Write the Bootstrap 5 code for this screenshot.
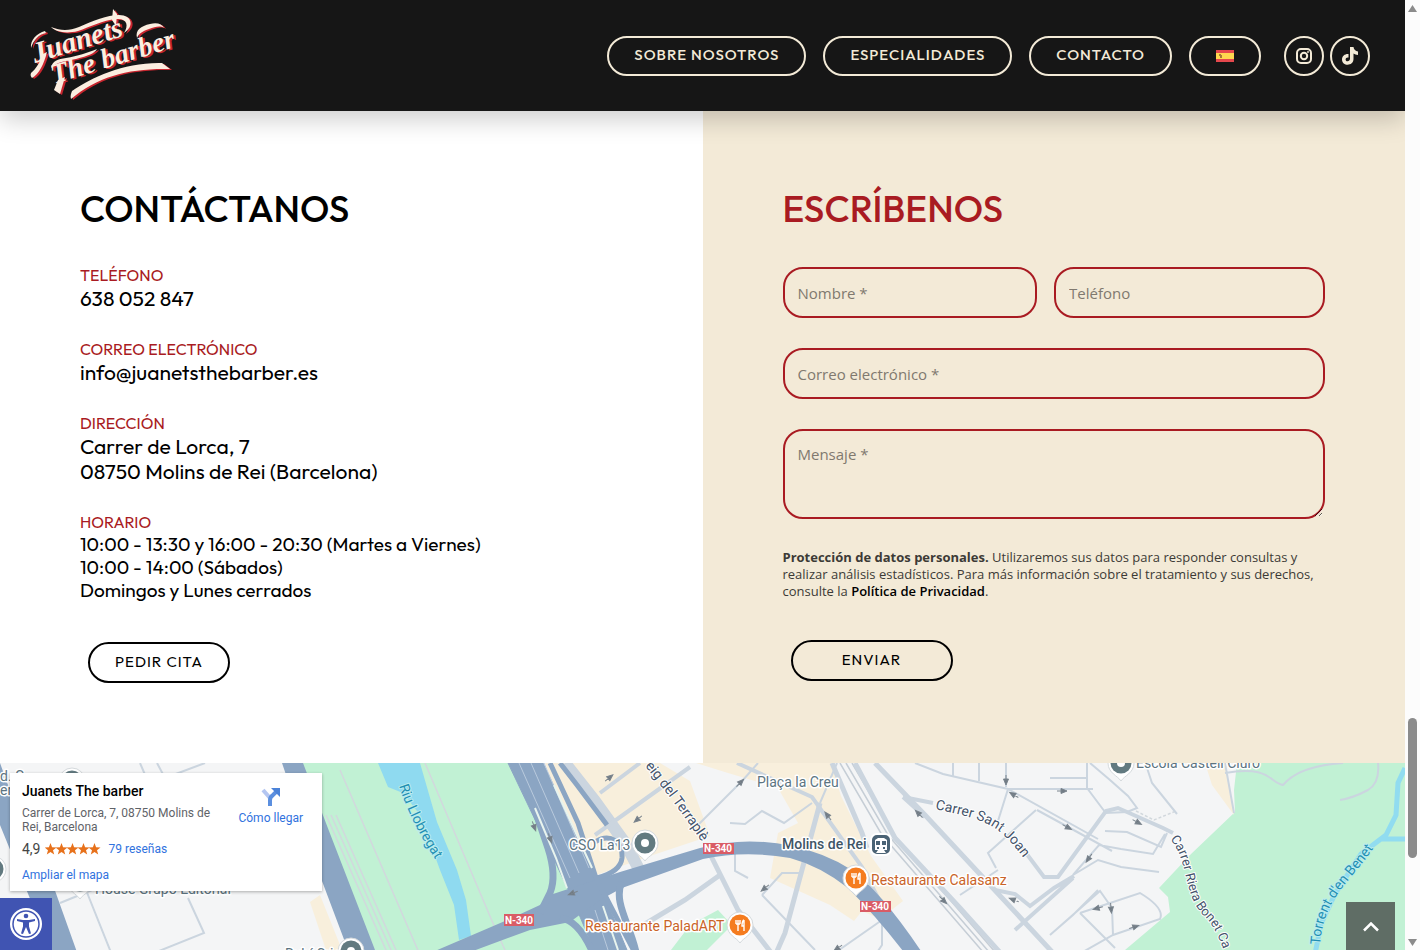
<!DOCTYPE html>
<html lang="es">
<head>
<meta charset="utf-8">
<meta name="viewport" content="width=device-width, initial-scale=1">
<title>Juanets The barber</title>
<link href="https://cdn.jsdelivr.net/npm/bootstrap@5.3.0/dist/css/bootstrap.min.css" rel="stylesheet">
<style>
  :root { --ink: #161616; --cream: #f3ead7; --brand: #a91b22; }
  body { font-family: Outfit, Lato, sans-serif; color: #000; background: #fff; }
  a { text-decoration: none; }
  .site-head { background: var(--ink); height: 111px; padding: 0 35px 0 30px; box-shadow: 0 8px 24px rgba(0,0,0,.2); z-index: 2; }
  .menu { gap: 17px; margin-right: 23px; }
  .social { gap: 6px; }
  .pill { display: inline-flex; align-items: center; justify-content: center; height: 40px; border: 2px solid var(--cream); border-radius: 20px; color: var(--cream); font-size: 15px; font-weight: 500; letter-spacing: 1px; padding: 0 25px; }
  .pill-flag { width: 72px; padding: 0; }
  .round { width: 40px; padding: 0; }
  .pane { padding: 74px 80px 80px; }
  .pane-form { background: var(--cream); }
  .pane h2 { font-size: 37px; font-weight: 500; line-height: 48px; margin-bottom: 32px; }
  .pane-form h2 { margin-bottom: 34px; }
  .pane-form h2, .tag { color: var(--brand); }
  .pane form { display: grid; gap: 30px; }
  .tag { font-size: 16px; line-height: 21px; }
  .big { font-size: 21px; line-height: 25px; }
  .hours { font-size: 19px; line-height: 23px; }
  .fact { margin-bottom: 28px; }
  .act { height: 41px; border: 2px solid #000; border-radius: 21px; background: transparent; color: #000; font-size: 15px; letter-spacing: 1px; margin: 12px 8px 0; width: 142px; }
  .act-send { width: 162px; margin-top: 10px; }
  .two-up { display: grid; grid-template-columns: 47fr 50fr; gap: 17px; }
  .field { width: 100%; height: 51px; border: 2px solid var(--brand); border-radius: 20px; background: transparent; padding: 0 13px; font: 15px "Open Sans", sans-serif; display: block; }
  .field::placeholder { color: #80796f; opacity: 1; }
  textarea.field { height: 90px; padding: 13px; resize: vertical; }
  .notice { font: 13px/17px "Open Sans", sans-serif; color: #3c3a36; margin: 0; }
  .notice a { color: #000; font-weight: 600; }
  .map-zone { min-height: 187px; background: #f4f5f6; font-family: Roboto, sans-serif; }
  .map-zone > svg { position: absolute; inset: 0; width: 100%; height: 100%; }
  .place { position: absolute; left: 10px; top: 10px; width: 312px; background: #fff; box-shadow: 0 1px 3px rgba(0,0,0,.3); padding: 10px 11px 9px 12px; font-size: 12px; line-height: 14px; color: #5f6368; }
  .place a { color: #3072de; }
  .place h3 { font-size: 14px; line-height: 16px; font-weight: 500; color: #000; margin: 0 0 7px; }
  .score { font-size: 14px; color: #444; }
  .access { position: absolute; left: 0; bottom: 0; width: 52px; height: 52px; background: #4054b2; border: 0; padding: 0; }
  .to-top { position: absolute; right: 10px; bottom: 0; width: 49px; height: 48px; background: #5f6d65; border: 0; padding: 0; }
  .rail { width: 15px; background: #fcfcfc; height: 100vh; top: 0; padding: 4px 0; }
  .thumb { width: 9px; height: 140px; border-radius: 5px; background: #8b8b8b; margin-bottom: 80px; }
</style>
</head>
<body>
<div class="d-flex">
<div class="d-flex flex-column flex-grow-1 min-vh-100 overflow-hidden">
  <header class="site-head d-flex align-items-center justify-content-between position-relative">
    <a href="#" aria-label="Juanets The barber">
      <svg width="150" height="96" viewBox="30 8 150 96" font-family="Liberation Serif, serif" font-weight="700" font-style="italic">
        <defs>
          <g id="brand">
            <text transform="translate(35 63) rotate(-17)" font-size="29">Juanets</text>
            <text transform="translate(54 84) rotate(-17)" font-size="28">The barber</text>
            <path d="M51 27c10 4 18 4 28 0 14-6 28-12 40-12 14 0 15 12 5 18 5-8 3-15-8-14-13 1-26 8-38 12-12 3-22 1-27-4z"/>
            <path d="M112 20l1-11 4 5-1 12z"/>
            <path d="M46 33c-7 1-13 8-15 15-1-8 6-15 14-17z"/>
            <path d="M31 73c5-4 9-11 12-19l4-2c-3 12-8 22-15 26-1-1-2-3-1-5z"/>
            <path d="M51 68c1-7 7-9 15-10 12-2 21-5 31-9-2 4-9 7-21 10-11 2-19 3-25 9z"/>
            <path d="M58 80l7-3-5 17-6-4z"/>
            <path d="M71 99c-1-3 0-5 1-8 20-14 53-29 90-28l8 6c-40-1-72 7-99 30z"/>
            <path d="M137 38c-2-8 4-12 13-14 7-2 12 0 14 4-4-3-9-1-15 1-6 2-10 4-12 9z"/>
          </g>
        </defs>
        <use href="#brand" x="2" y="1" fill="#c7252e"/>
        <use href="#brand" fill="#fbeee0"/>
      </svg>
    </a>
    <nav class="d-flex align-items-center">
      <div class="d-flex menu">
        <a class="pill" href="#">SOBRE NOSOTROS</a>
        <a class="pill" href="#">ESPECIALIDADES</a>
        <a class="pill" href="#">CONTACTO</a>
        <a class="pill pill-flag" href="#" aria-label="Español"><svg width="18" height="12" viewBox="0 0 18 12"><path fill="#e5484d" d="M0 0h18v12H0z"/><path fill="#ffd84f" d="M0 3h18v6H0z"/><path fill="#a77a35" d="M3 4h2v1h1v3H4V6H3z"/></svg></a>
      </div>
      <div class="d-flex social">
        <a class="pill round" href="#" aria-label="Instagram"><svg width="16" height="16" viewBox="0 0 16 16" fill="none" stroke="#f3ead7" stroke-width="2"><rect x="1" y="1" width="14" height="14" rx="4"/><circle cx="8" cy="8" r="3.200"/><circle cx="12" cy="4" r=".6" stroke-width="1"/></svg></a>
        <a class="pill round" href="#" aria-label="TikTok"><svg width="16" height="18" viewBox="0 0 16 18"><path fill="#f3ead7" d="M8 0h3.500c.3 2.600 2 4.200 4.500 4.600V8c-1.800 0-3.300-.5-4.500-1.400V12c0 7.500-11.500 7.500-11.500.4C0 9 3 6.700 6.500 7v3.600C4.700 10.300 3.600 11.200 3.600 12.400c0 2.700 4.400 2.500 4.400-.6z"/></svg></a>
      </div>
    </nav>
  </header>

  <main class="row g-0">
    <section class="col-6 pane">
      <h2>CONTÁCTANOS</h2>
      <div class="fact"><div class="tag">TELÉFONO</div><div class="big">638 052 847</div></div>
      <div class="fact"><div class="tag">CORREO ELECTRÓNICO</div><div class="big">info@juanetsthebarber.es</div></div>
      <div class="fact"><div class="tag">DIRECCIÓN</div><div class="big">Carrer de Lorca, 7<br>08750 Molins de Rei (Barcelona)</div></div>
      <div class="fact"><div class="tag">HORARIO</div><div class="hours">10:00 - 13:30 y 16:00 - 20:30 (Martes a Viernes)<br>10:00 - 14:00 (Sábados)<br>Domingos y Lunes cerrados</div></div>
      <button class="act" type="button">PEDIR CITA</button>
    </section>
    <section class="col-6 pane pane-form">
      <h2>ESCRÍBENOS</h2>
      <form>
        <div class="two-up">
          <input class="field" type="text" placeholder="Nombre *" aria-label="Nombre">
          <input class="field" type="tel" placeholder="Teléfono" aria-label="Teléfono">
        </div>
        <input class="field" type="email" placeholder="Correo electrónico *" aria-label="Correo electrónico">
        <textarea class="field" placeholder="Mensaje *" aria-label="Mensaje"></textarea>
        <p class="notice"><strong>Protección de datos personales.</strong> Utilizaremos sus datos para responder consultas y realizar análisis estadísticos. Para más información sobre el tratamiento y sus derechos, consulte la <a href="#">Política de Privacidad</a>.</p>
        <button class="act act-send" type="submit">ENVIAR</button>
      </form>
    </section>
  </main>

  <section class="map-zone position-relative flex-grow-1 overflow-hidden" aria-label="Mapa">
    <svg viewBox="0 763 1405 187" preserveAspectRatio="xMinYMin slice" fill="none">
      <defs>
        <path id="arw" d="M-5 0H2M-1-2.500L5 0l-6 2.500z" stroke="#7b858e" stroke-width="1" fill="#6b757e"/>
        <g id="pin"><path d="M0 18C-3 13-13 10-13 0a13 13 0 0126 0C13 10 3 13 0 18z" fill="#fff" stroke="#d4d9dc" stroke-width="1"/></g>
        <g id="food"><use href="#pin"/><circle r="10.500" fill="#f57c1f"/><path d="M-4-5v4M-2-5v4M0-5v4M-4-1h4M-2-1v7M4-5v11M4-5c-2 1-2 4-2 6h2" stroke="#fff" stroke-width="1.400"/></g>
        <g id="spot"><use href="#pin"/><circle r="10.500" fill="#627a80"/><circle r="4" fill="#fff"/></g>
        <path id="p-riu" d="M399 786Q413 828 442 869"/>
        <path id="p-ter" d="M645 766Q673 800 704 845"/>
        <path id="p-joan" d="M935 809C985 820 997 823 1022 856"/>
        <path id="p-bonet" d="M1170 839C1190 862 1182 895 1205 917Q1218 929 1228 965"/>
        <path id="p-tor" d="M1320 945C1324 895 1350 885 1382 836"/>
      </defs>
      <!-- parks and built-up areas -->
      <path fill="#c1f1d4" d="M302 763h206l62 130 24 57H373zM1237 763h168v187h-280l45-38-2-15-9-9 31-33 45-43-1-22zM690 925l28-15 14 15-25 25h-36z"/>
      <path fill="#f8efdc" d="M545 763h115l30 18 20 55-60 20-62 22zM696 763h135l10 33 30 60 32 45-23 18-18-8-8 10-24-16-60-27 8-45 20-10-20-35-50-15zM1205 763h20l9 52-22-30zM320 895l22 55h-16l-16-48z"/>
      <!-- water -->
      <path fill="#8fdaf0" d="M378 763h42l17 59 20 48 9 30 5 36-12 4-5-35-14-35-20-55-17-22-15-6z"/>
      <path stroke="#91dcf0" stroke-width="5" d="M1405 768l-7 15-2 32-10 20-25 19-26 40-14 30-6 30M1380 839h25"/>
      <!-- railway and footpaths -->
      <g stroke="#d2d8dd" stroke-width="1.500">
        <path d="M340 770l80 185M425 763l70 165 10 22M336 815l60 135M331 815l60 135M326 815l60 135"/>
        <path d="M840 763l42 72 108 125M846 763l42 72 108 125M852 763l42 72 108 125" stroke="#c6ced6"/>
        <path d="M1136 811l18 9 22-9" stroke-dasharray="3 2"/>
      </g>
      <!-- streets -->
      <g stroke="#cbd5df" stroke-width="2">
        <path d="M140 763l12 28M157 763l8 15 40-15M60 903l32-13M86 890l26 65M188 898l16 35-50 20"/>
        <path stroke-width="12" d="M565 763l30 38 30 42 16 30"/>
        <path stroke-width="4" d="M690 767l-95 68M640 763l-40 30M737 763l75 34 50 70 25 48"/>
        <path stroke-width="5" d="M855 763l40 75 65 70 45 50M875 763l50 52 65 70 65 70M832 763l30 70 5 15M820 803l-35 130-11 25M708 850l30 60 35 45M720 875l-35 25-50 30"/>
        <path d="M698 825l45-45 15-17M730 823l15 1 17-13 22 12 28-20M735 850v21l13 7M762 895l20-22h18M762 895l53 55M882 920v25l-8 12M882 920l-43 30M820 803l17-40"/>
        <path d="M915 763l28 11 65 15 90 50M953 763v13M979 763v18M1006 763v24M1008 789h85M1050 778h37M1008 789l-10 32M1036 810l-48 43 8 15M960 895l38-25"/>
        <path stroke-width="4" d="M903 797l30 6M1020 845l24 32h14l48-66 12-3 45 20 10 5M903 797l22 20M995 890l20 4 15 12 24-18 20-12M1015 930l58-52"/>
        <path d="M1087 763v25l18 24M1037 810l75 41M1050 935l23-20 25-25M1090 763l20 17 18 16 9 12-10 4-22 1M1147 768l5 15 25 31M1105 831l22 1 34 15 6-14M1073 875l26-30 22 4 32 5 12-20M1073 875l25-15 23 7 38 5M1050 935l50-44 12 17 1 27M1080 913l60-20q25 15 20 26l-47 16-32 18M1080 913l35 35M1225 763l9 50M1225 773c45-8 45 10 58 12 10-12 30-20 60-22M1378 763q2 20-10 27-15 8-28 10"/>
      </g>
      <!-- motorways -->
      <g fill="#8ba5c3" stroke="#8ba5c3">
        <path d="M508 763h35l54 115 30 72h-33l-24-57z"/>
        <path stroke="none" d="M282 763h21l26 68 46 119h-27l-26-69z"/>
        <path stroke="none" d="M0 800v25l53 130h25L53 885 8 785 0 763z"/>
        <path stroke="none" d="M435 951L505 921 540 905 553 894 620 872 700 848Q745 836 792 846 825 853 850 869 880 890 921 951H903Q875 915 848 888 820 866 790 858 745 850 703 859L622 888 600 900 570 922 530 930 473 951z"/>
        <g fill="none">
          <path stroke-width="7" d="M530 795l18 53q9 28 2 45l-10 20"/>
          <path stroke-width="5" d="M550 763l28 60 18 55 40 77M560 763l17 22 30 40M595 842c16-10 28 1 27 16-1 10-10 16-25 20"/>
          <path stroke-width="7" d="M622 882c-10 20 10 45 15 75M560 918q20 2 35 40"/>
        </g>
      </g>
      <g stroke="#b9cadd" stroke-width="1"><path d="M519 763l51 115M531 763l48 110M544 763l45 105M595 910l13 40"/><path stroke="#e8f4ee" stroke-width="2" d="M535 808l21 50 11 30M554 785l26 57 12 26M603 906l15 44"/></g>
      <g>
        <use href="#arw" transform="translate(534 826) rotate(70)"/><use href="#arw" transform="translate(550 838) rotate(70)"/><use href="#arw" transform="translate(573 893) rotate(160)"/><use href="#arw" transform="translate(609 778) rotate(-40)"/><use href="#arw" transform="translate(638 819) rotate(140)"/><use href="#arw" transform="translate(740 783) rotate(-45)"/><use href="#arw" transform="translate(828 816) rotate(-128)"/><use href="#arw" transform="translate(765 888) rotate(140)"/><use href="#arw" transform="translate(919 814) rotate(-135)"/><use href="#arw" transform="translate(943 900) rotate(45)"/><use href="#arw" transform="translate(1014 795) rotate(-150)"/><use href="#arw" transform="translate(1006 780) rotate(90)"/><use href="#arw" transform="translate(1014 900) rotate(-160)"/><use href="#arw" transform="translate(1062 791)"/><use href="#arw" transform="translate(1067 827) rotate(28)"/><use href="#arw" transform="translate(1137 822) rotate(28)"/><use href="#arw" transform="translate(1089 858) rotate(125)"/><use href="#arw" transform="translate(1098 908) rotate(165)"/><use href="#arw" transform="translate(1111 908) rotate(85)"/><use href="#arw" transform="translate(1134 927) rotate(-18)"/><use href="#arw" transform="translate(838 948) rotate(145)"/>
      </g>
      <!-- markers -->
      <use href="#spot" x="645" y="843"/><use href="#spot" x="1121" y="763"/><use href="#spot" x="351" y="951"/><use href="#spot" x="80" y="881"/><use href="#spot" x="72" y="781"/><use href="#spot" x="-7" y="869"/>
      <use href="#food" x="856" y="878"/><use href="#food" x="740" y="925"/>
      <rect x="871" y="834" width="20" height="21" rx="6" fill="#4b6375" stroke="#fff" stroke-width="2"/>
      <path fill="#fff" d="M878 838h6l3 2v10h-12v-10zM876 853l2-3h6l2 3z"/><path fill="#4b6375" d="M876 841h4v4h-4zM882 841h4v4h-4zM877 847h2v2h-2zM883 847h2v2h-2z"/>
      <g fill="#d95c66"><path d="M504 914h30v12h-30zM703 843h31v11h-31zM860 901h31v11h-31z"/></g>
      <g fill="#fff" font-size="10" font-weight="700" text-anchor="middle"><text x="519" y="924">N-340</text><text x="718" y="852">N-340</text><text x="875" y="910">N-340</text></g>
      <g font-size="14" fill="#5c7481" stroke="#fff" stroke-width="3" stroke-linejoin="round" paint-order="stroke">
        <text x="757" y="787">Plaça la Creu</text><text x="569" y="850">CSO La13</text><text x="1136" y="768">Escola Castell Ciuró</text><text x="95" y="894">House Grupo Editorial</text><text x="285" y="959">Rubí Cris</text><text x="0" y="781">d. G</text><text x="0" y="795">er</text>
        <text x="782" y="849" fill="#3f5566" font-weight="500">Molins de Rei</text>
        <g fill="#c96328"><text x="871" y="885">Restaurante Calasanz</text><text x="585" y="931">Restaurante PaladART</text></g>
        <g fill="#44536a" stroke-width="2"><text><textPath href="#p-ter">eig del Terraplè</textPath></text><text><textPath href="#p-joan">Carrer Sant Joan</textPath></text><text font-size="13"><textPath href="#p-bonet">Carrer Riera Bonet Ca</textPath></text></g>
        <g fill="#1f8fb3" stroke="#b9ecee" stroke-width="2"><text><textPath href="#p-riu">Riu Llobregat</textPath></text><text><textPath href="#p-tor">Torrent d'en Benet</textPath></text></g>
      </g>
    </svg>

    <div class="place d-flex justify-content-between">
      <div>
        <h3>Juanets The barber</h3>
        <div>Carrer de Lorca, 7, 08750 Molins de<br>Rei, Barcelona</div>
        <div class="d-flex align-items-center mt-1 pt-1 mb-2 pb-1">
          <span class="me-1 score">4,9</span>
          <svg class="me-2" width="56" height="12" viewBox="0 0 56 12" fill="#e7711b"><defs><path id="star" d="M5.500 0l1.600 4.200 4.400.2L8 7.200l1.200 4.300-3.700-2.400-3.700 2.400L3 7.200-.5 4.400l4.400-.2z"/></defs><use href="#star"/><use href="#star" x="11"/><use href="#star" x="22"/><use href="#star" x="33"/><use href="#star" x="44"/></svg>
          <a href="#">79 reseñas</a>
        </div>
        <a href="#">Ampliar el mapa</a>
      </div>
      <a class="text-center pe-2 pt-1" href="#"><svg class="d-block mx-auto mb-1" width="20" height="20" viewBox="0 0 20 20" fill="none"><path stroke="#b4c6f1" stroke-width="4" d="M2 3l7 8"/><path stroke="#5b8fdf" stroke-width="4" d="M9 19v-6q0-3 3-5l3-3"/><path fill="#4b82d8" d="M10 1h9v9z"/></svg>Cómo llegar</a>
    </div>
    <button class="access" type="button" aria-label="Accesibilidad"><svg width="34" height="34" viewBox="0 0 34 34"><circle cx="17" cy="17" r="16" fill="#fff"/><circle cx="17" cy="17" r="13" fill="none" stroke="#4054b2" stroke-width="1.500"/><circle cx="17" cy="9" r="2.300" fill="#4054b2"/><path fill="#4054b2" d="M8 12l6 1h6l6-1v2l-6 1.500v4l2 7-2 .5-3-7-3 7-2-.5 2-7v-4L8 14z"/></svg></button>
    <button class="to-top" type="button" aria-label="Subir"><svg width="16" height="10" viewBox="0 0 16 10" fill="none" stroke="#fff" stroke-width="2.500"><path d="M1 8.500l7-7 7 7"/></svg></button>
  </section>
</div>
<div class="rail position-sticky flex-shrink-0 d-flex flex-column align-items-center" aria-hidden="true">
  <svg width="9" height="8" viewBox="0 0 9 8"><path fill="#8b8b8b" d="M4.500 1L9 8H0z"/></svg>
  <div class="thumb mt-auto"></div>
  <svg width="9" height="8" viewBox="0 0 9 8"><path fill="#8b8b8b" d="M0 1h9L4.500 8z"/></svg>
</div>
</div>
<script src="https://cdn.jsdelivr.net/npm/bootstrap@5.3.0/dist/js/bootstrap.bundle.min.js"></script>
</body>
</html>
